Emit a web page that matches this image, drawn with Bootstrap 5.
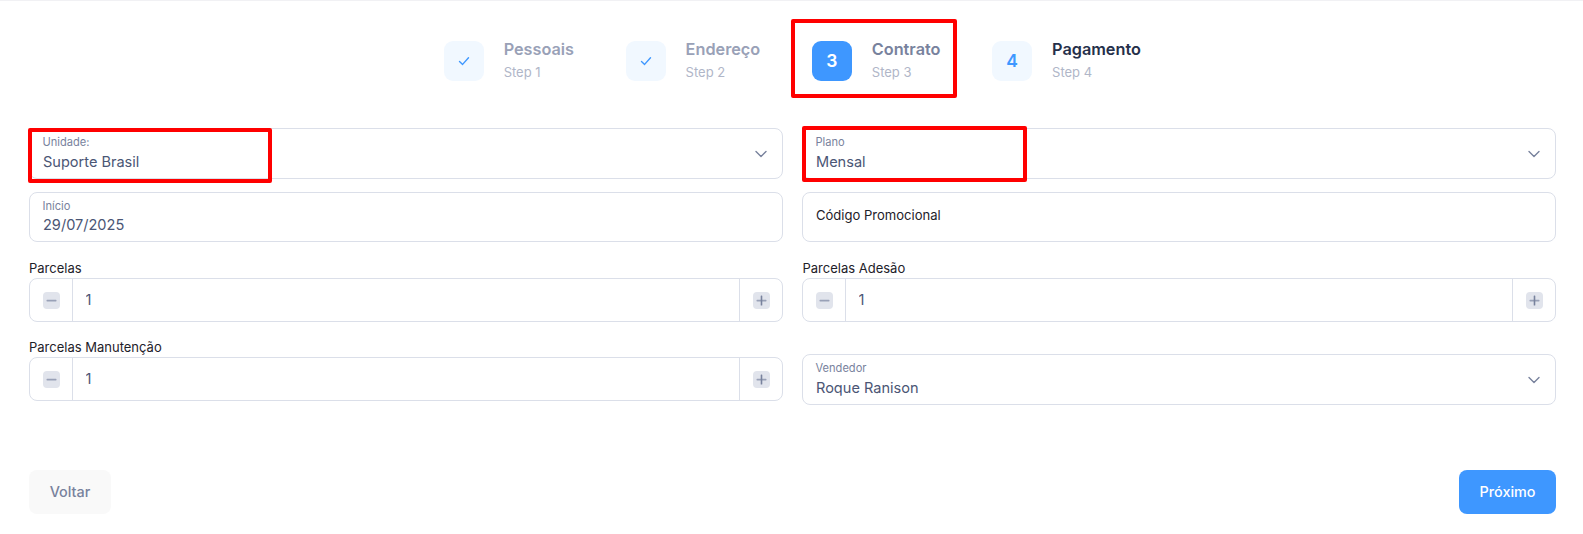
<!DOCTYPE html>
<html lang="pt-BR">
<head>
<meta charset="utf-8">
<title>Contrato</title>
<link rel="stylesheet" href="https://cdn.jsdelivr.net/npm/bootstrap@5.3.0/dist/css/bootstrap.min.css">
<style>
html,body{height:100%;}
body{font-family:Inter,"Liberation Sans",sans-serif;background:#fff;overflow:hidden;position:relative;}
.page-shell{height:534px;border-top:1px solid #f1f1f4;padding:0 27.5px 0 29px;}
.wizard-nav{height:127px;padding-top:40px;gap:51.6px;}
.wizard-step{gap:20px;align-items:flex-start;}
.wizard-icon{width:40px;height:40px;border-radius:9px;background:#f1f8ff;color:#3e97ff;font-size:17.5px;font-weight:600;}
.wizard-title{font-size:16.25px;font-weight:600;line-height:20px;margin-top:-2px;color:#99a1b7;white-space:nowrap;}
.wizard-sub{font-size:13px;line-height:16px;margin-top:5px;color:#b0b6c8;}
.is-current .wizard-icon{background:#3e97ff;color:#fff;}
.is-current .wizard-title{color:#78829d;}
.is-pending .wizard-title{color:#252f4a;}
.form-line{--bs-gutter-x:19.5px;}
.field-box{position:relative;height:51px;border:1px solid #dbdfe9;border-radius:8px;}
.field-box.field-short{height:50px;}
.field-caption{position:absolute;left:12.5px;top:6px;font-size:11.1px;line-height:14px;color:#78829d;z-index:4;}
.field-box select,.field-box input{width:100%;height:100%;border:0;border-radius:8px;padding:16px 30px 0 13px;font-size:14.55px;line-height:20px;color:#4b5675;background-color:transparent;box-shadow:none;}
.field-box select{background-image:url("data:image/svg+xml,%3csvg xmlns='http://www.w3.org/2000/svg' viewBox='0 0 16 16'%3e%3cpath fill='none' stroke='%2378829d' stroke-linecap='round' stroke-linejoin='round' stroke-width='1.4' d='m3 5.5 5 5 5-5'/%3e%3c/svg%3e");background-size:16px 16px;background-position:right 13px center;}
.field-box .plain-field{padding-top:0;padding-bottom:4px;}
.field-box .plain-field::placeholder{color:#1e2129;opacity:1;font-size:13.05px;}
.field-gap{margin-top:13px;}
.count-gap-a{margin-top:16px;}
.count-gap-b{margin-top:15px;}
.count-label{display:block;height:20px;font-size:13px;line-height:20px;margin:0;color:#1e2129;}
.count-label-shift{padding-left:.5px;}
.count-box{height:44px;border:1px solid #dbdfe9;border-radius:8px;flex-wrap:nowrap;}
.count-box .count-btn{width:43px;flex:none;border:0;padding:0 0 2px;background:transparent;border-radius:0;}
.count-box .count-btn:first-child{border-right:1px solid #dbdfe9;}
.count-box .count-btn:last-child{border-left:1px solid #dbdfe9;padding-left:1px;}
.count-box .form-control{border:0;height:42px;padding:0 13.5px 0;font-size:14.55px;color:#4b5675;box-shadow:none;}
.seller-col{padding-top:17px;}
.action-line{margin-top:65px;}
.back-action,.next-action{height:44px;border:0;border-radius:8px;font-size:14.4px;font-weight:500;padding:0 0 1px;}
.back-action{width:82px;background:#f9f9f9;color:#78829d;}
.next-action{width:97px;background:#3e97ff;color:#fff;padding-left:1px;}
.mark-box{position:absolute;border:4px solid #f00;border-radius:2px;pointer-events:none;z-index:10;}
.mark-a{left:791px;top:19px;width:166px;height:79px;}
.mark-b{left:28px;top:128px;width:244px;height:55px;}
.mark-c{left:802px;top:126px;width:225px;height:56px;}
</style>
</head>
<body>
<div class="page-shell">
  <div class="wizard-nav d-flex justify-content-center">
    <div class="wizard-step d-flex">
      <div class="wizard-icon d-flex align-items-center justify-content-center"><svg width="14" height="14" viewBox="0 0 14 14" fill="none" stroke="#3e97ff" stroke-width="1.4" stroke-linecap="round" stroke-linejoin="round"><path d="M2.5 7.5 5.6 10.4 11.5 3.8"/></svg></div>
      <div><div class="wizard-title">Pessoais</div><div class="wizard-sub">Step 1</div></div>
    </div>
    <div class="wizard-step d-flex">
      <div class="wizard-icon d-flex align-items-center justify-content-center"><svg width="14" height="14" viewBox="0 0 14 14" fill="none" stroke="#3e97ff" stroke-width="1.4" stroke-linecap="round" stroke-linejoin="round"><path d="M2.5 7.5 5.6 10.4 11.5 3.8"/></svg></div>
      <div><div class="wizard-title">Endereço</div><div class="wizard-sub">Step 2</div></div>
    </div>
    <div class="wizard-step d-flex is-current">
      <div class="wizard-icon d-flex align-items-center justify-content-center">3</div>
      <div><div class="wizard-title">Contrato</div><div class="wizard-sub">Step 3</div></div>
    </div>
    <div class="wizard-step d-flex is-pending">
      <div class="wizard-icon d-flex align-items-center justify-content-center">4</div>
      <div><div class="wizard-title">Pagamento</div><div class="wizard-sub">Step 4</div></div>
    </div>
  </div>

  <div class="row form-line">
    <div class="col-6"><div class="field-box"><span class="field-caption">Unidade:</span><select class="form-select"><option>Suporte Brasil</option></select></div></div>
    <div class="col-6"><div class="field-box"><span class="field-caption">Plano</span><select class="form-select"><option>Mensal</option></select></div></div>
  </div>
  <div class="row form-line field-gap">
    <div class="col-6"><div class="field-box field-short"><span class="field-caption">Início</span><input class="form-control" value="29/07/2025"></div></div>
    <div class="col-6"><div class="field-box field-short"><input class="form-control plain-field" placeholder="Código Promocional"></div></div>
  </div>
  <div class="row form-line count-gap-a">
    <div class="col-6">
      <label class="count-label">Parcelas</label>
      <div class="input-group count-box">
        <button class="btn count-btn" type="button" aria-label="Diminuir"><svg width="17" height="17" viewBox="0 0 17 17"><rect width="17" height="17" rx="4" fill="#e1e4ec"/><rect x="3.5" y="7.8" width="10" height="1.6" rx=".6" fill="#99a1b7"/></svg></button>
        <input class="form-control" value="1">
        <button class="btn count-btn" type="button" aria-label="Aumentar"><svg width="17" height="17" viewBox="0 0 17 17"><rect width="17" height="17" rx="4" fill="#e1e4ec"/><rect x="3.5" y="7.8" width="10" height="1.6" rx=".6" fill="#99a1b7"/><rect x="7.7" y="3.5" width="1.6" height="10" rx=".6" fill="#78829d"/></svg></button>
      </div>
    </div>
    <div class="col-6">
      <label class="count-label count-label-shift">Parcelas Adesão</label>
      <div class="input-group count-box">
        <button class="btn count-btn" type="button" aria-label="Diminuir"><svg width="17" height="17" viewBox="0 0 17 17"><rect width="17" height="17" rx="4" fill="#e1e4ec"/><rect x="3.5" y="7.8" width="10" height="1.6" rx=".6" fill="#99a1b7"/></svg></button>
        <input class="form-control" value="1">
        <button class="btn count-btn" type="button" aria-label="Aumentar"><svg width="17" height="17" viewBox="0 0 17 17"><rect width="17" height="17" rx="4" fill="#e1e4ec"/><rect x="3.5" y="7.8" width="10" height="1.6" rx=".6" fill="#99a1b7"/><rect x="7.7" y="3.5" width="1.6" height="10" rx=".6" fill="#78829d"/></svg></button>
      </div>
    </div>
  </div>
  <div class="row form-line count-gap-b">
    <div class="col-6">
      <label class="count-label">Parcelas Manutenção</label>
      <div class="input-group count-box">
        <button class="btn count-btn" type="button" aria-label="Diminuir"><svg width="17" height="17" viewBox="0 0 17 17"><rect width="17" height="17" rx="4" fill="#e1e4ec"/><rect x="3.5" y="7.8" width="10" height="1.6" rx=".6" fill="#99a1b7"/></svg></button>
        <input class="form-control" value="1">
        <button class="btn count-btn" type="button" aria-label="Aumentar"><svg width="17" height="17" viewBox="0 0 17 17"><rect width="17" height="17" rx="4" fill="#e1e4ec"/><rect x="3.5" y="7.8" width="10" height="1.6" rx=".6" fill="#99a1b7"/><rect x="7.7" y="3.5" width="1.6" height="10" rx=".6" fill="#78829d"/></svg></button>
      </div>
    </div>
    <div class="col-6 seller-col"><div class="field-box"><span class="field-caption">Vendedor</span><select class="form-select"><option>Roque Ranison</option></select></div></div>
  </div>
  <div class="action-line d-flex justify-content-between">
    <button class="btn back-action" type="button">Voltar</button>
    <button class="btn next-action" type="button">Próximo</button>
  </div>
</div>
<div class="mark-box mark-a"></div>
<div class="mark-box mark-b"></div>
<div class="mark-box mark-c"></div>
</body>
</html>
